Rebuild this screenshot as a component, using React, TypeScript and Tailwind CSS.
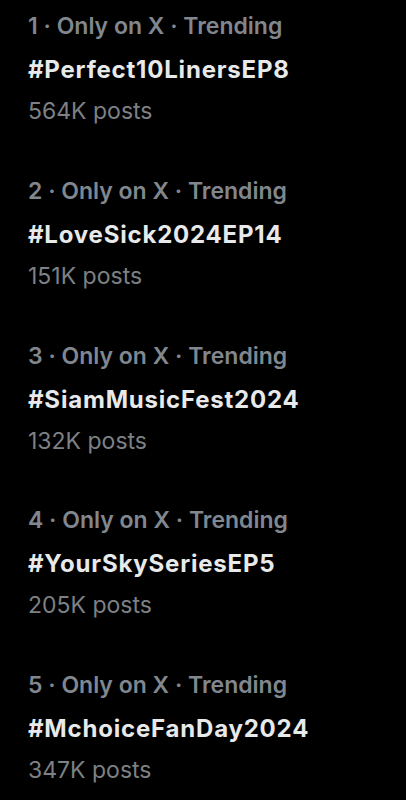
const trends = [
  { rank: 1, tag: '#Perfect10LinersEP8', posts: '564K posts' },
  { rank: 2, tag: '#LoveSick2024EP14', posts: '151K posts' },
  { rank: 3, tag: '#SiamMusicFest2024', posts: '132K posts' },
  { rank: 4, tag: '#YourSkySeriesEP5', posts: '205K posts' },
  { rank: 5, tag: '#MchoiceFanDay2024', posts: '347K posts' },
];

const TrendRow = ({ rank, tag, posts }: { rank: number; tag: string; posts: string }) => {
  return (
    <div className="h-[164.75px] px-7 pt-[11px]">
      <p className="text-[23px] leading-[30px] font-semibold text-[#80878e]">
        {rank} · Only on X · Trending
      </p>
      <p className="mt-[13px] text-[24px] leading-[32px] font-bold tracking-[0.8px] text-[#e7e9ea]">
        {tag}
      </p>
      <p className="mt-[10px] text-[23px] leading-[30px] text-[#7d8084]">{posts}</p>
    </div>
  );
};

export default function App() {
  return (
    <div className="min-h-[800px] w-full bg-black font-['Inter',sans-serif]">
      {trends.map((t) => (
        <TrendRow key={t.rank} {...t} />
      ))}
    </div>
  );
}
